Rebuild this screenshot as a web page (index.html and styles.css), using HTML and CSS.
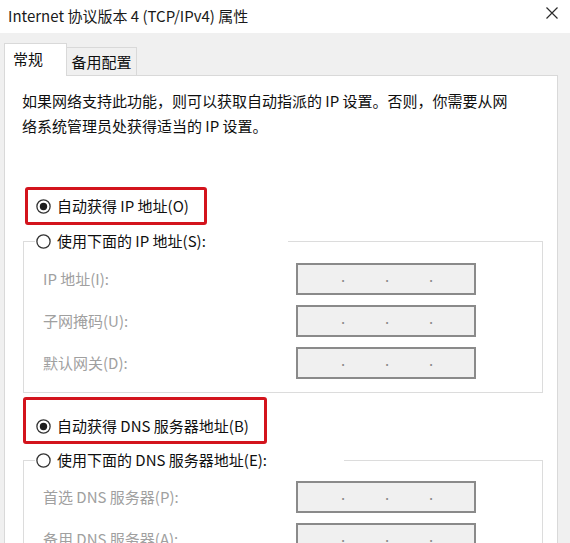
FILE: index.html
```html
<!DOCTYPE html>
<html lang="zh-CN">
<head>
<meta charset="utf-8">
<title>Internet 协议版本 4 (TCP/IPv4) 属性</title>
<link rel="stylesheet" href="styles.css">
</head>
<body>
<div class="window">
  <header class="titlebar">
    <span class="title">Internet 协议版本 4 (TCP/IPv4) 属性</span>
    <svg class="close" width="12" height="12" viewBox="0 0 12 12" aria-hidden="true"><path d="M0.5 0.5L11.5 11.5M11.5 0.5L0.5 11.5" stroke="#2b2b2b" stroke-width="1.2" fill="none"/></svg>
  </header>
  <nav class="tabs">
    <div class="tab tab-active">常规</div>
    <div class="tab">备用配置</div>
  </nav>
  <section class="panel">
    <p class="desc">如果网络支持此功能，则可以获取自动指派的 IP 设置。否则，你需要从网<br>络系统管理员处获得适当的 IP 设置。</p>

    <div class="mark mark-ip">
      <label class="option">
        <svg class="radio" width="15" height="15" viewBox="0 0 15 15"><circle cx="7.5" cy="7.5" r="6.6" fill="#fff" stroke="#333" stroke-width="1.3"/><circle cx="7.5" cy="7.5" r="3.7" fill="#1c1c1c"/></svg>
        <span>自动获得 IP 地址(O)</span>
      </label>
    </div>

    <fieldset class="group group-ip">
      <legend class="legend legend-ip">
        <span class="option">
          <svg class="radio" width="15" height="15" viewBox="0 0 15 15"><circle cx="7.5" cy="7.5" r="6.6" fill="#fff" stroke="#333" stroke-width="1.3"/></svg>
          <span>使用下面的 IP 地址(S):</span>
        </span>
      </legend>
      <div class="fields fields-ip">
        <div class="field"><span class="label">IP 地址(I):</span><div class="ip"><span>.</span><span>.</span><span>.</span></div></div>
        <div class="field"><span class="label">子网掩码(U):</span><div class="ip"><span>.</span><span>.</span><span>.</span></div></div>
        <div class="field"><span class="label">默认网关(D):</span><div class="ip"><span>.</span><span>.</span><span>.</span></div></div>
      </div>
    </fieldset>

    <div class="mark mark-dns">
      <label class="option">
        <svg class="radio" width="15" height="15" viewBox="0 0 15 15"><circle cx="7.5" cy="7.5" r="6.6" fill="#fff" stroke="#333" stroke-width="1.3"/><circle cx="7.5" cy="7.5" r="3.7" fill="#1c1c1c"/></svg>
        <span>自动获得 DNS 服务器地址(B)</span>
      </label>
    </div>

    <fieldset class="group group-dns">
      <legend class="legend legend-dns">
        <span class="option">
          <svg class="radio" width="15" height="15" viewBox="0 0 15 15"><circle cx="7.5" cy="7.5" r="6.6" fill="#fff" stroke="#333" stroke-width="1.3"/></svg>
          <span>使用下面的 DNS 服务器地址(E):</span>
        </span>
      </legend>
      <div class="fields fields-dns">
        <div class="field"><span class="label">首选 DNS 服务器(P):</span><div class="ip"><span>.</span><span>.</span><span>.</span></div></div>
        <div class="field"><span class="label">备用 DNS 服务器(A):</span><div class="ip"><span>.</span><span>.</span><span>.</span></div></div>
      </div>
    </fieldset>
  </section>
</div>
</body>
</html>
```

FILE: styles.css
```css
* {
  box-sizing: border-box;
}

html,
body {
  margin: 0;
  height: 543px;
  overflow: hidden;
}

body {
  background: #f0f0f0;
  font-family: "Noto Sans CJK SC", "Microsoft YaHei", "Noto Sans", sans-serif;
  color: #0f0f0f;
}

.titlebar {
  height: 33px;
  background: #fff;
  display: flex;
  align-items: center;
  justify-content: space-between;
  padding: 0 12px 2px 8px;
}

.title {
  font-size: 15px;
  line-height: 20px;
  color: #1a1a1a;
}

.close {
  align-self: flex-start;
  margin-top: 7px;
}

.tabs {
  height: 42px;
  display: flex;
  align-items: flex-end;
  padding-left: 4px;
}

.tab {
  height: 28px;
  width: 71px;
  margin-left: -1px;
  border: 1px solid #d9d9d9;
  border-bottom: none;
  background: #f0f0f0;
  font-size: 15px;
  line-height: 27px;
  text-align: center;
  color: #0f0f0f;
}

.tab-active {
  position: relative;
  z-index: 1;
  height: 33px;
  width: 63px;
  margin-left: 0;
  margin-bottom: -1px;
  background: #fff;
  text-align: left;
  padding-left: 8px;
  line-height: 30px;
}

.panel {
  margin-left: 4px;
  width: 554px;
  height: 620px;
  background: #fff;
  border: 1px solid #d9d9d9;
  padding: 12px 15px 0 17px;
}

.desc {
  margin: 0;
  font-size: 15px;
  line-height: 25px;
  color: #0f0f0f;
}

.option {
  display: flex;
  align-items: center;
  gap: 6px;
  font-size: 15px;
  line-height: 20px;
  color: #0f0f0f;
  white-space: nowrap;
}

.radio {
  flex: none;
  display: block;
}

.mark {
  display: flex;
  align-items: center;
  border: 3px solid #d3141d;
  border-radius: 3px;
}

.mark-ip {
  margin: 49px 0 0 3px;
  width: 182px;
  height: 38px;
  padding-left: 8px;
}

.mark-dns {
  margin: 4px 0 0 1px;
  width: 244px;
  height: 47px;
  padding: 11px 0 0 10px;
}

.group {
  margin: 6px 0 0 1px;
  width: 520px;
  min-width: 0;
  border: 1px solid #dcdcdc;
  padding: 0 0 13px 0;
}

.legend {
  margin-left: 11px;
  padding: 0 0 0 1px;
  height: 20px;
}

.legend-ip {
  width: 253px;
}

.legend-dns {
  width: 309px;
}

.fields {
  display: flex;
  flex-direction: column;
  gap: 10px;
  padding-left: 19px;
}

.fields-ip {
  margin-top: 12px;
}

.fields-dns {
  margin-top: 11px;
}

.field {
  display: grid;
  grid-template-columns: 253px 180px;
  align-items: center;
}

.label {
  font-size: 15px;
  line-height: 20px;
  color: #a0a0a0;
}

.ip {
  height: 32px;
  border: 2px solid #8a8a8a;
  background: #f0f0f0;
  display: flex;
  padding-left: 23px;
}

.ip span {
  width: 44px;
  text-align: center;
  font-size: 15px;
  line-height: 22px;
  color: #8a8a8a;
}
```
